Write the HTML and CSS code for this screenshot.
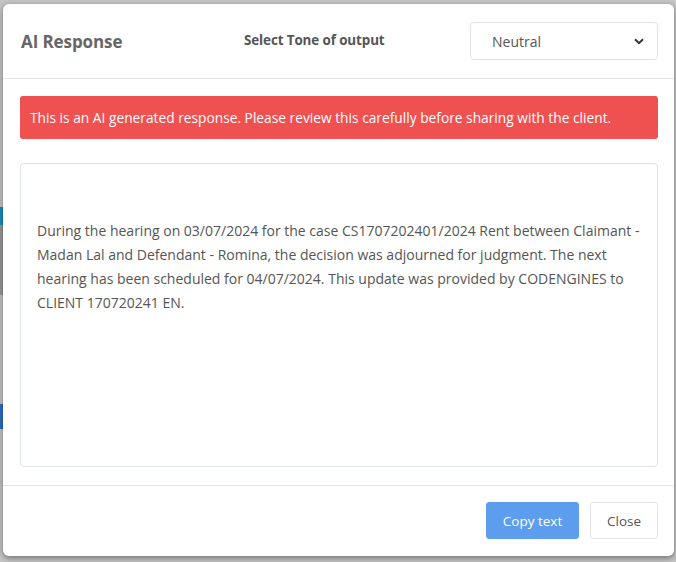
FILE: index.html
```html
<!DOCTYPE html>
<html>
<head>
<meta charset="utf-8">
<link rel="stylesheet" href="styles.css">
</head>
<body>
<div class="backdrop">
  <div class="modal">
    <div class="modal-header">
      <h2 class="title">AI Response</h2>
      <div class="tone-label">Select Tone of output</div>
      <div class="select">
        <span>Neutral</span>
        <svg class="chev" width="10" height="7" viewBox="0 0 10 7"><path d="M1 1.2 L5 5.2 L9 1.2" fill="none" stroke="#333" stroke-width="2"/></svg>
      </div>
    </div>
    <div class="modal-body">
      <div class="alert">This is an AI generated response. Please review this carefully before sharing with the client.</div>
      <div class="response">During the hearing on 03/07/2024 for the case CS1707202401/2024 Rent between Claimant - Madan Lal and Defendant - Romina, the decision was adjourned for judgment. The next hearing has been scheduled for 04/07/2024. This update was provided by CODENGINES to CLIENT 170720241 EN.</div>
    </div>
    <div class="modal-footer">
      <button class="btn btn-primary">Copy text</button>
      <button class="btn btn-light">Close</button>
    </div>
  </div>
</div>
</body>
</html>
```
FILE: styles.css
```css
html, body {
  margin: 0;
  padding: 0;
  height: 100%;
}
body {
  background: #c6c6c6;
  font-family: "Open Sans", "Noto Sans", sans-serif;
  overflow: hidden;
}
.backdrop {
  height: 562px;
  padding: 4px 2px 0 3px;
  box-sizing: border-box;
  background:
    linear-gradient(#1c8fbf, #1c8fbf) 0 207px / 3px 18px no-repeat,
    linear-gradient(#2f6fc4, #2f6fc4) 0 404px / 3px 25px no-repeat,
    linear-gradient(#9a9a9a, #9a9a9a) 0 225px / 3px 70px no-repeat,
    #c6c6c6;
}
.modal {
  width: 671px;
  height: 552px;
  background: #fff;
  border-radius: 6px;
  box-shadow: 0 2px 6px rgba(0,0,0,0.45);
  display: flex;
  flex-direction: column;
}
.modal-header {
  height: 74px;
  border-bottom: 1px solid #e4e6e8;
  display: flex;
  align-items: center;
  padding: 0 16px 0 18px;
}
.title {
  margin: 0;
  font-size: 17px;
  font-weight: 700;
  color: #666;
  width: 223px;
  letter-spacing: -0.1px;
}
.tone-label {
  font-size: 13.4px;
  font-weight: 700;
  color: #555;
  flex: 1;
  letter-spacing: -0.1px;
  margin-top: -3px;
}
.select {
  width: 188px;
  height: 38px;
  box-sizing: border-box;
  border: 1px solid #dfe3e7;
  border-radius: 4px;
  display: flex;
  align-items: center;
  justify-content: space-between;
  padding: 0 13px 0 21px;
  font-size: 14px;
  color: #555;
}
.chev { margin-top: 1px; }
.modal-body {
  padding: 17px 16px 18px 17px;
  flex: 1;
  display: flex;
  flex-direction: column;
  gap: 24px;
}
.alert {
  height: 43px;
  box-sizing: border-box;
  background: #ef5050;
  border-radius: 3px;
  color: #fff;
  font-size: 13.75px;
  padding: 0 10px;
  display: flex;
  align-items: center;
}
.response {
  flex: 1;
  border: 1px solid #dee3e7;
  border-radius: 4px;
  padding: 55px 16px 0 16px;
  font-size: 14px;
  line-height: 24px;
  color: #555;
}
.modal-footer {
  height: 71px;
  box-sizing: border-box;
  border-top: 1px solid #e4e6e8;
  display: flex;
  justify-content: flex-end;
  align-items: flex-start;
  padding: 16px 16px 0 0;
  gap: 11px;
}
.btn {
  height: 37px;
  border-radius: 3px;
  font-family: "Open Sans", "Noto Sans", sans-serif;
  font-size: 13.5px;
  padding: 0;
  cursor: pointer;
}
.btn-primary {
  width: 93px;
  background: #5c9ded;
  border: 1px solid #5c9ded;
  color: #fff;
}
.btn-light {
  width: 68px;
  background: #fff;
  border: 1px solid #e2e4e7;
  color: #555;
}
```
